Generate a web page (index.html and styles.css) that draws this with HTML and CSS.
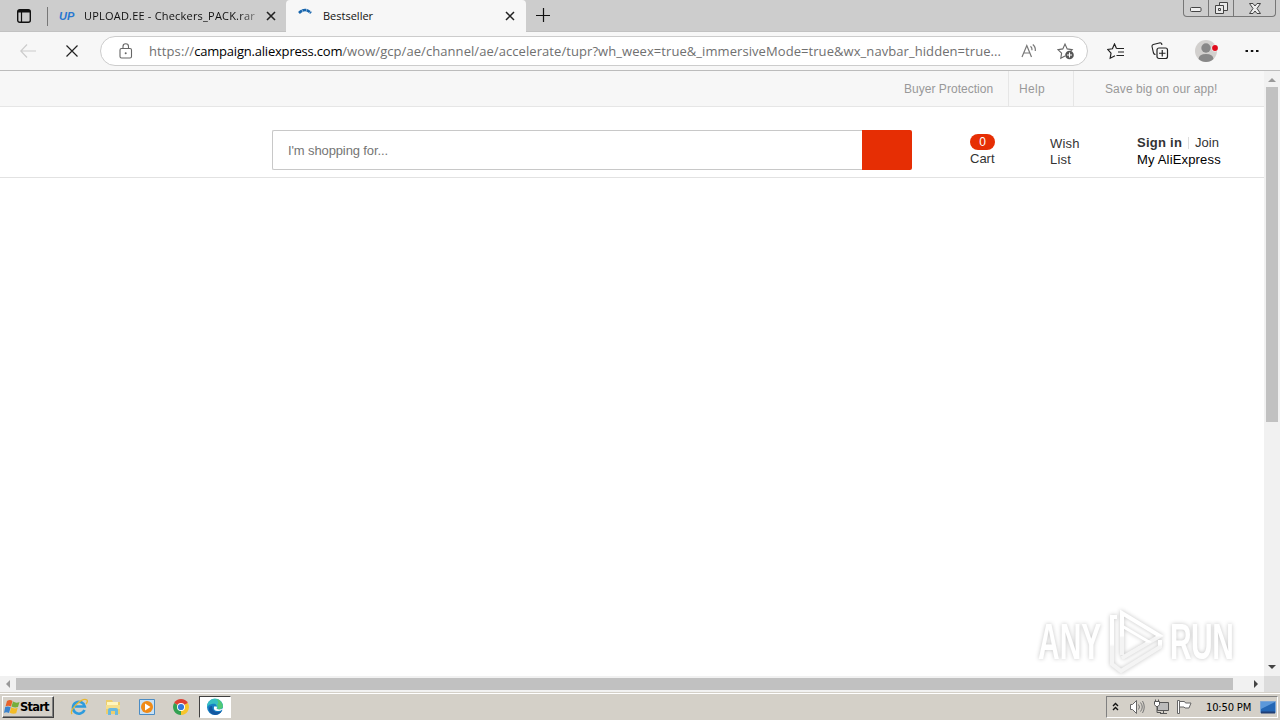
FILE: index.html
```
<!DOCTYPE html>
<html lang="en">
  <head>
    <meta charset="UTF-8" />
    <meta name="viewport" content="width=device-width, initial-scale=1.0" />
    <title>Bestseller</title>
    <link rel="stylesheet" href="styles.css">
  </head>
  <body>
    <header class="tabbar">
      <svg class="tab-menu" width="16" height="16" viewBox="0 0 16 16">
        <rect x="1.7" y="1.7" width="12.6" height="12.6" rx="2" fill="none" stroke="#111" stroke-width="1.4" />
        <path d="M5.5 4v10" fill="none" stroke="#111" stroke-width="1.2" />
        <path d="M2 2h12v2.5H2z" fill="#111" />
      </svg>
      <div class="tab">
        <span class="up-logo">UP</span>
        <span class="tab-title upload-title">UPLOAD.EE - Checkers_PACK.rar</span>
        <svg class="tab-close" width="10" height="10" viewBox="0 0 10 10"><path d="M1 1l8 8M9 1l-8 8" stroke="#222" stroke-width="1.6" /></svg>
      </div>
      <div class="tab active">
        <svg class="spinner" width="16" height="16" viewBox="0 0 16 16"><path d="M2 5Q8-1 14 5" fill="none" stroke="#1765ad" stroke-width="2.6" stroke-dasharray="3.8 .4" /></svg>
        <span class="tab-title">Bestseller</span>
        <svg class="tab-close" width="10" height="10" viewBox="0 0 10 10"><path d="M1 1l8 8M9 1l-8 8" stroke="#222" stroke-width="1.5" /></svg>
      </div>
      <svg class="new-tab" width="14" height="14" viewBox="0 0 14 14"><path d="M7.5 0v14M0 7.5h14" stroke="#111" stroke-width="1.2" /></svg>
      <div class="win-buttons">
        <span class="win-btn"><svg width="12" height="14" viewBox="0 0 12 14"><rect x=".5" y="6.5" width="10.5" height="4" rx="1" fill="#eee" stroke="#444" /></svg></span>
        <span class="win-btn"><svg width="13" height="14" viewBox="0 0 13 14"><g fill="#e8e8e8" stroke="#444"><path d="M4.500 1.500h8v8h-8z" /><path d="M.5 4.500h8v8h-8z" /><path d="M3.500 7.500h2v2h-2z" /></g></svg></span>
        <span class="win-btn win-close"><svg width="12" height="11" viewBox="0 0 12 11"><path d="M.5.500h3.500L6 3 8 .5h3.500L8 5.500l3.500 5H8L6 8l-2 2.500H.5L4 5.500z" fill="#eee" stroke="#444" /></svg></span>
      </div>
    </header>

    <nav class="toolbar">
      <svg class="back" width="16" height="14" viewBox="0 0 16 14"><path d="M7 .5L.8 7 7 13.500M1 7h15" fill="none" stroke="#ccc" stroke-width="1.200" /></svg>
      <svg class="stop" width="12" height="12" viewBox="0 0 12 12"><path d="M.5.5l11 11M11.500.5l-11 11" stroke="#222" stroke-width="1.2" /></svg>
      <div class="address">
        <svg class="lock" width="14" height="17" viewBox="0 0 14 17">
          <rect x="1" y="5.500" width="11.500" height="9.500" rx="1.500" fill="none" stroke="#666" stroke-width="1.100" />
          <path d="M4 5.500V3.500a2.700 2.700 0 0 1 5.500 0v2" fill="none" stroke="#666" stroke-width="1.100" />
          <circle cx="6.700" cy="10.300" r="1" fill="#666" />
        </svg>
        <div class="url"><span class="scheme">https://</span><span class="host">campaign.aliexpress.com</span><span class="path">/wow/gcp/ae/channel/ae/accelerate/tupr?wh_weex=true&amp;_immersiveMode=true&amp;wx_navbar_hidden=true...</span></div>
        <svg class="read" width="17" height="16" viewBox="0 0 17 16"><path d="M1 14L5.800 2.500 10.500 14M2.800 10h6M9.500 3.200q1.800 1.500 1.500 4M11.800 1.500q3 2.500 2.500 6.500" fill="none" stroke="#777" stroke-width="1.200" /></svg>
        <svg class="fav-add" width="18" height="18" viewBox="0 0 18 18">
          <path d="M8 14l-4.200 2.200.8-5L1 7.600l4.800-.7L8 2l2.200 4.900 5 .7-2 2" fill="none" stroke="#666" stroke-width="1.100" />
          <circle cx="12.500" cy="13" r="4.300" fill="#555" />
          <path d="M12.500 10.500v5M10 13h5" stroke="#fff" stroke-width="1.100" />
        </svg>
      </div>
      <svg class="favorites" width="18" height="17" viewBox="0 0 18 17"><path d="M9.500 5.500L7.500 1 5.400 5.800.7 6.500 4 10.200l-.8 5L8 12.700M9.500 5.500h7.500M11 9h6M9.500 12.500H17" fill="none" stroke="#222" stroke-width="1.200" /></svg>
      <svg class="collections" width="18" height="18" viewBox="0 0 18 18"><path d="M4.500 12.500q-1.500 0-2-1.500L1 4.500Q.800 3 2.200 2.500l7-1.700q1.300 0 1.600 1.200v1" fill="none" stroke="#222" stroke-width="1.100" /><rect x="6" y="6" width="10.500" height="10.500" rx="2" fill="#f7f7f7" stroke="#222" stroke-width="1.200" /><path d="M11.250 8v6.500M8 11.250h6.500" stroke="#222" stroke-width="1.200" /></svg>
      <svg class="profile" width="24" height="24" viewBox="0 0 24 24">
        <circle cx="11" cy="12" r="11" fill="#d2d0ce" />
        <circle cx="11" cy="9" r="4.700" fill="#888" />
        <path d="M3.500 20Q4 15 11 15t7.500 5q-3 3-7.500 3t-7.500-3z" fill="#888" />
        <circle cx="20" cy="9" r="3.500" fill="#f7f7f7" />
        <circle cx="20" cy="9" r="2.900" fill="#e00b1c" />
      </svg>
      <svg class="more" width="14" height="4" viewBox="0 0 14 4"><path d="M.5 1h2.500v2H.5zM5.800 1h2.500v2H5.800zM11 1h2.500v2H11z" fill="#111" /></svg>
    </nav>

    <div class="viewport">
      <main class="page">
        <div class="topbar">
          <a class="protection">Buyer Protection</a>
          <a class="help">Help</a>
          <a class="app">Save big on our app!</a>
        </div>
        <div class="header">
          <form class="search">
            <input type="text" placeholder="I'm shopping for..." />
            <button type="button" aria-label="Search"></button>
          </form>
          <div class="cart"><span class="count">0</span><span>Cart</span></div>
          <div class="wish">Wish<br>List</div>
          <div class="account">
            <div class="sign"><b>Sign in</b><i class="bar"></i><span>Join</span></div>
            <div class="mine">My AliExpress</div>
          </div>
        </div>
      </main>
      <div class="vscroll">
        <i class="arrow up"></i>
        <div class="vthumb"></div>
        <i class="arrow down"></i>
      </div>
      <div class="hscroll">
        <i class="arrow left"></i>
        <div class="hthumb"></div>
        <i class="arrow right"></i>
      </div>
      <div class="corner"></div>
      <div class="watermark">
        <span class="any">ANY</span>
        <svg width="56" height="66" viewBox="0 0 56 66">
          <defs>
            <linearGradient id="fade" x2="0" y2="1">
              <stop offset=".5" stop-color="#fff" />
              <stop offset=".55" stop-color="#f4f4f4" />
            </linearGradient>
          </defs>
          <g fill="none" stroke="url(#fade)" stroke-width="4">
            <path d="M14 46V4l38 23-38 22" />
            <path d="M9 8H4v47l9 7 39-24v-7" />
            <path d="M14 17l27 16-27 16" stroke-width="3" />
          </g>
        </svg>
        <span class="run">RUN</span>
      </div>
    </div>

    <footer class="taskbar">
      <button class="start" type="button">
        <svg width="16" height="16" viewBox="0 0 16 16">
          <path d="M3 2q3-2 5.500 0L7 7.500Q4 6 1.500 7.500z" fill="#e8622a" />
          <path d="M9 2.500q3 2 6.500.5L14 8q-3 1-6.500-.5z" fill="#75ae3c" />
          <path d="M1.200 8q3-1 5.500.3L5 14q-3-1.500-5 0z" fill="#3b83cd" />
          <path d="M7.200 8.300q3 2 6.500.5l-1.500 5.500q-3 1-6.500-.5z" fill="#f3bc27" />
        </svg>
        Start
      </button>
      <div class="launch">
        <svg width="18" height="18" viewBox="0 0 18 18"><path d="M14.500 12a6 6 0 1 1 .3-3.500H5" fill="none" stroke="#2d9bdd" stroke-width="2.600" /><path d="M2 16C-1 12 12-1 17 2q1 2-1 4" fill="none" stroke="#e9b72e" stroke-width="1.300" /></svg>
        <svg width="18" height="18" viewBox="0 0 18 18"><path d="M2 2h6l1 2h7v12H2z" fill="#edce6c" /><path d="M3 4h11v3H3z" fill="#fff6bd" /><path d="M2 7h14v4H2z" fill="#f5df8d" /><path d="M4 17v-5q0-2 2-2h6q2 0 2 2v5h-3v-4H7v4z" fill="#69b9df" /></svg>
        <svg width="18" height="18" viewBox="0 0 18 18"><path d="M1.500 1.500h15v15h-15z" fill="#c8e1f5" stroke="#4b8cc4" /><circle cx="9" cy="9" r="6" fill="#f08a16" /><path d="M7 5.500v7L12.500 9z" fill="#fff" /></svg>
        <svg width="18" height="18" viewBox="0 0 18 18"><path d="M9 9L2.100 5a8 8 0 0 1 13.800 0z" fill="#df4033" /><path d="M9 9v8A8 8 0 0 1 2.100 5z" fill="#33a152" /><path d="M9 9l6.900-4A8 8 0 0 1 9 17z" fill="#f7c52c" /><circle cx="9" cy="9" r="4" fill="#fff" /><circle cx="9" cy="9" r="3.100" fill="#3479dc" /></svg>
      </div>
      <div class="task-active">
        <svg width="18" height="18" viewBox="0 0 18 18"><circle cx="9" cy="9" r="8" fill="#1680c4" /><path d="M1 9a8 8 0 0 1 16-1c0 4-5 4-7 2 2-3-1-5-4-4Q3 6 1 9z" fill="#37bfc2" /><path d="M10 1.100A8 8 0 0 1 17 9q-2 3-6 2 2-2 0-4 3-3-1-5.900z" fill="#51c977" /><path d="M6 8q0 6 6 6 2 0 4-1-3 4-7 4-6-1-6-6 0-3 3-3z" fill="#1457a0" /><path d="M8 8.500Q7 13 12 13q3 0 4-1.500l1.500 1V10l-2 1q-3 1-5-.5 1-1 0-2z" fill="#fff" /></svg>
      </div>
      <div class="tray">
        <svg class="chevrons" width="7" height="10" viewBox="0 0 7 10"><path d="M1 4l2.500-2.500L6 4M1 8l2.500-2.500L6 8" fill="none" stroke="#111" stroke-width="1.400" /></svg>
        <svg class="sound" width="17" height="16" viewBox="0 0 17 16"><path d="M1.500 5.500h2l4-4v13l-4-4h-2z" fill="#fff" stroke="#666" /><path d="M9.500 5.500q2 2.500 0 5M11.500 3.500q3.500 4.500 0 9M13.500 2q3.500 6 0 12" fill="none" stroke="#777" /></svg>
        <svg class="network" width="17" height="16" viewBox="0 0 17 16"><path d="M4.500 3.500h11v8h-11z" fill="#bbb" stroke="#555" /><path d="M7 14.500h7M10.500 12v2" stroke="#555" /><path d="M1.500 2.500h5v3l-1.500 2H3l-1.500-2zM2.500.5v2M5.500.5v2" fill="#fff" stroke="#555" /><path d="M4 8v5.500h4" fill="none" stroke="#555" /></svg>
        <svg class="flag" width="17" height="16" viewBox="0 0 17 16"><path d="M1.500 1.500h2v13h-2z" fill="#fff" stroke="#666" /><path d="M3.500 2.500h5l1 1.500h5.500l-2 5h-4l-1-1h-4.500z" fill="#fff" stroke="#666" /></svg>
        <span class="clock">10:50 PM</span>
        <svg class="desktop" width="16" height="13" viewBox="0 0 16 13"><path d="M.5.5h15v11H.5z" fill="#2467b5" stroke="#7aa5d6" /><path d="M1 1h14L1 8z" fill="#5b98da" /><path d="M1 11.500h14" stroke="#203f75" stroke-width="2" /></svg>
      </div>
    </footer>
  </body>
</html>
```
FILE: styles.css
```
* {
  box-sizing: border-box;
}
body {
  margin: 0;
  width: 1280px;
  height: 720px;
  overflow: hidden;
  display: flex;
  flex-direction: column;
  font-family: "Liberation Sans", Arial, sans-serif;
  background: #fff;
}
svg {
  display: block;
  flex: none;
}

/* tabs */
.tabbar {
  display: flex;
  height: 32px;
  background: #cdcdcd;
  border-bottom: 1px solid #c2c2c2;
  font-family: "Open Sans", sans-serif;
}
.tab-menu {
  margin: 8px 15px 0 16px;
}
.tab {
  display: flex;
  align-items: center;
  width: 239px;
  height: 32px;
  padding-left: 11px;
  color: #111;
  font-size: 11px;
  background: linear-gradient(#777, #777) 0 7px / 1px 19px no-repeat;
}
.tab.active {
  width: 240px;
  background: #f7f7f7;
  border-radius: 4px 4px 0 0;
}
.up-logo {
  width: 25px;
  margin-left: 1px;
  font: italic bold 11px "Liberation Sans", sans-serif;
  color: #2977d1;
}
.up-logo,
.tab-title {
  padding-bottom: 1px;
}
.tab-title {
  flex: 1;
  white-space: nowrap;
}
.upload-title {
  letter-spacing: 0.2px;
  -webkit-mask-image: linear-gradient(90deg, #000 155px, rgba(0, 0, 0, 0.4) 172px);
  mask-image: linear-gradient(90deg, #000 155px, rgba(0, 0, 0, 0.4) 172px);
}
.tab-close {
  margin-right: 11px;
}
.tab:not(.active) .tab-close {
  margin-right: 10px;
}
.spinner {
  margin-right: 10px;
}
.new-tab {
  margin: 8px 0 0 10px;
}
.win-buttons {
  display: flex;
  width: 93px;
  height: 17px;
  margin: 0 4px 0 auto;
  border: 1px solid #777;
  border-top: 0;
  border-radius: 0 0 4px 4px;
}
.win-btn {
  display: flex;
  justify-content: center;
  align-items: center;
  width: 25px;
  border-right: 1px solid #777;
}
.win-close {
  width: 41px;
  border: 0;
}

/* address bar */
.toolbar {
  display: flex;
  align-items: center;
  height: 39px;
  background: #f7f7f7;
  border-bottom: 1px solid #bcbcbc;
}
.back {
  margin-left: 20px;
}
.stop {
  margin: 0 28px 0 30px;
}
.address {
  display: flex;
  align-items: center;
  width: 988px;
  height: 30px;
  margin-left: -6px;
  padding-left: 18px;
  background: #fff;
  border: 1px solid #ccc;
  border-radius: 15px;
}
.url {
  width: 872px;
  margin-left: 16px;
  font-family: "Open Sans", sans-serif;
  font-size: 13px;
  line-height: 18px;
  color: #707070;
  white-space: nowrap;
}
.scheme {
  letter-spacing: 0.1px;
}
.host {
  color: #000;
  letter-spacing: -0.2px;
}
.path {
  letter-spacing: 0.07px;
}
.read {
  margin-right: 19px;
}
.favorites {
  margin-left: 19px;
}
.collections {
  margin-left: 26px;
}
.profile {
  margin-left: 26px;
}
.more {
  margin-left: 26px;
}

/* page and scrollbars */
.viewport {
  position: relative;
  display: grid;
  grid-template-columns: 1264px 16px;
  grid-template-rows: 605px 16px;
  height: 621px;
}
.page {
  background: #fff;
}
.topbar {
  display: flex;
  height: 36px;
  background: #f7f7f7;
  border-bottom: 1px solid #e6e6e6;
  color: #999;
  font-size: 12px;
  line-height: 36px;
}
.protection {
  width: 105px;
  margin-left: 904px;
  border-right: 1px solid #e6e6e6;
  letter-spacing: 0.03px;
}
.help {
  width: 65px;
  padding-left: 10px;
  border-right: 1px solid #e6e6e6;
  letter-spacing: 0.3px;
}
.app {
  padding-left: 31px;
  letter-spacing: 0.08px;
}
.header {
  display: flex;
  height: 71px;
  padding: 23px 0 0 272px;
  border-bottom: 1px solid #e2e2e2;
  color: #333;
  font-size: 13px;
  line-height: 16px;
}
.search {
  display: flex;
  width: 640px;
  height: 40px;
}
.search input {
  width: 590px;
  padding: 0 15px;
  border: 1px solid #c8c8c8;
  border-right: 0;
  border-radius: 2px 0 0 2px;
  font: 13px "Liberation Sans", sans-serif;
  letter-spacing: -0.12px;
}
.search input::placeholder {
  color: #757575;
}
.search button {
  width: 50px;
  border: 0;
  border-radius: 0 2px 2px 0;
  background: #e62e04;
}
.cart {
  display: flex;
  flex-direction: column;
  width: 80px;
  margin-left: 58px;
  padding-top: 4px;
}
.count {
  width: 25px;
  height: 16px;
  margin-bottom: 1px;
  border-radius: 8px;
  background: #e62e04;
  color: #fff;
  text-align: center;
  font-size: 12px;
}
.wish {
  width: 87px;
  padding-top: 6px;
  letter-spacing: 0.2px;
}
.account {
  padding-top: 5px;
}
.sign {
  display: flex;
  height: 17px;
}
.sign b {
  letter-spacing: 0.25px;
}
.bar {
  width: 1px;
  height: 12px;
  margin: 2px 6px 0 6px;
  background: #ddd;
}
.mine {
  color: #000;
  letter-spacing: 0.17px;
}
.vscroll {
  display: flex;
  flex-direction: column;
  align-items: center;
  background: #f1f1f1;
}
.vthumb {
  width: 12px;
  height: 335px;
  margin: 5px 0 auto;
  background: #c1c1c1;
}
.hscroll {
  display: flex;
  align-items: center;
  background: #f1f1f1;
}
.hthumb {
  width: 1217px;
  height: 12px;
  margin-left: 6px;
  background: #c1c1c1;
}
.corner {
  background: #dcdcdc;
}
.arrow {
  border: 4px solid transparent;
}
.up {
  margin-top: 7px;
  border-top: 0;
  border-bottom-color: #999;
}
.down {
  margin-bottom: 7px;
  border-bottom: 0;
  border-top-color: #444;
}
.left {
  margin-left: 6px;
  border-left: 0;
  border-right-color: #999;
}
.right {
  margin: 0 6px 0 auto;
  border-right: 0;
  border-left-color: #444;
}
.watermark {
  position: absolute;
  right: 46px;
  bottom: 17px;
  display: flex;
  align-items: center;
  gap: 6px;
  color: #fff;
  filter: drop-shadow(0 0 2px #c4c4c4);
}
.watermark span {
  width: 64px;
  font-size: 50px;
  font-weight: bold;
  line-height: 60px;
  transform: scaleX(0.6);
  transform-origin: left;
}
.watermark .run {
  letter-spacing: -1px;
}

/* taskbar */
.taskbar {
  display: flex;
  align-items: center;
  height: 28px;
  padding: 1px 2px 0;
  background: #d4d0c8;
  border-top: 1px solid #d4d0c8;
  box-shadow: inset 0 1px #fff;
}
.start {
  display: flex;
  align-items: center;
  width: 52px;
  height: 22px;
  padding: 0 0 0 1px;
  border: 1px solid;
  border-color: #fff #404040 #404040 #fff;
  box-shadow: inset -1px -1px #808080;
  background: #d4d0c8;
  color: #000;
  font: bold 11.5px "DejaVu Sans", sans-serif;
  letter-spacing: -0.8px;
}
.launch {
  display: flex;
  gap: 16px;
  margin-left: 16px;
}
.task-active {
  display: flex;
  justify-content: center;
  align-items: center;
  width: 32px;
  height: 22px;
  margin-left: 9px;
  background: #fff;
  border: 1px solid;
  border-color: #404040 #fff #fff #404040;
}
.tray {
  display: flex;
  align-items: center;
  width: 172px;
  height: 22px;
  margin-left: auto;
  padding-left: 5px;
  border: 1px solid;
  border-color: #808080 #fff #fff #808080;
}
.sound {
  margin-left: 10px;
}
.network {
  margin-left: 7px;
}
.flag {
  margin-left: 6px;
}
.clock {
  width: 54px;
  margin-left: 13px;
  font-family: "DejaVu Sans", sans-serif;
  font-size: 10px;
  letter-spacing: -0.2px;
  white-space: nowrap;
}
```
